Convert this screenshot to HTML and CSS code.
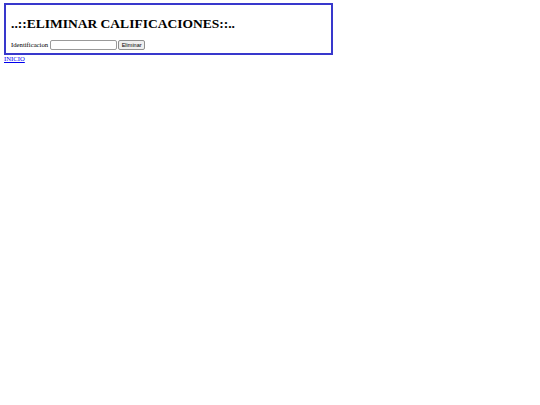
FILE: index.html
```html
<!DOCTYPE html>
<html>
<head>
<meta charset="utf-8">
<link rel="stylesheet" href="styles.css">
</head>
<body>
<div class="panel">
  <h1 class="title">..::ELIMINAR CALIFICACIONES::..</h1>
  <form class="form-row">
    <label class="label" for="ident">Identificacion</label>
    <input class="field" id="ident" type="text">
    <button class="btn" type="button">Eliminar</button>
  </form>
</div>
<a class="link" href="#">INICIO</a>
</body>
</html>
```

FILE: styles.css
```css
html, body {
  background: #ffffff;
}
body {
  margin: 3px 4px;
  font-family: "Liberation Serif", "Times New Roman", serif;
  font-size: 6.7px;
  color: #000;
}
.panel {
  width: 320px;
  border: 2px solid #3838cc;
  padding: 0 0 3px 5px;
}
.title {
  font-family: "Liberation Serif", "Times New Roman", serif;
  font-size: 13.5px;
  font-weight: bold;
  margin: 11px 0 7px 0;
  line-height: 16px;
}
.form-row {
  display: flex;
  align-items: center;
  gap: 1px;
  margin: 0;
  height: 11px;
}
.label {
  font-size: 6.7px;
  margin-right: 1px;
}
.field {
  box-sizing: border-box;
  width: 67px;
  height: 10px;
  border: 1px solid #9a9a9a;
  border-radius: 2px;
  padding: 0;
  margin: 0;
  background: #fff;
}
.btn {
  box-sizing: border-box;
  width: 27px;
  height: 10px;
  padding: 0;
  margin: 0;
  font-family: "Liberation Sans", Arial, sans-serif;
  font-size: 5.5px;
  line-height: 8px;
  color: #000;
  background: #efefef;
  border: 1px solid #8f8f8f;
  border-radius: 2px;
}
.link {
  display: block;
  font-size: 6.7px;
  color: #0000ee;
  text-decoration: underline;
  line-height: 8px;
}
```
